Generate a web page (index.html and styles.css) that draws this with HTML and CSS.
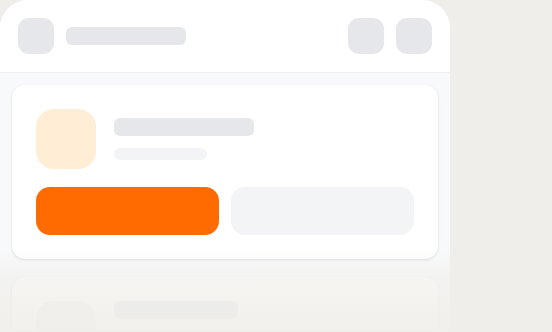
FILE: index.html
```html
<!DOCTYPE html>
<html lang="en">
<head>
  <meta charset="UTF-8" />
  <title>Skeleton</title>
  <link rel="stylesheet" href="styles.css">
</head>
<body>

<div class="phone">
  <header class="topbar">
    <div class="sk sk-icon"></div>
    <div class="sk sk-title"></div>
    <div class="spacer"></div>
    <div class="sk sk-icon"></div>
    <div class="sk sk-icon"></div>
  </header>

  <main class="feed">
    <div class="card">
      <div class="card-head">
        <div class="avatar"></div>
        <div class="lines">
          <div class="sk line-1"></div>
          <div class="sk line-2"></div>
        </div>
      </div>
      <div class="actions">
        <div class="btn btn-primary"></div>
        <div class="btn btn-ghost"></div>
      </div>
    </div>

    <div class="card card-muted">
      <div class="card-head top">
        <div class="avatar avatar-muted"></div>
        <div class="lines">
          <div class="sk line-short"></div>
        </div>
      </div>
    </div>
  </main>

  <div class="fade"></div>
</div>

</body>
</html>
```

FILE: styles.css
```css
body {
  margin: 0;
  background: #efeeea;
  font-family: "Inter", sans-serif;
  height: 332px;
  overflow: hidden;
}

.phone {
  position: relative;
  width: 450px;
  height: 330px;
  background: #f8f9fa;
  border-radius: 28px 28px 0 0;
  overflow: hidden;
}

.topbar {
  height: 73px;
  box-sizing: border-box;
  padding: 18px;
  background: white;
  border-bottom: 1px solid #f0f0f2;
  display: flex;
  align-items: flex-start;
  gap: 12px;
}
.spacer {
  flex: 1;
}
.sk {
  background: #e5e7eb;
  border-radius: 6px;
}
.sk-icon {
  width: 36px;
  height: 36px;
  border-radius: 11px;
}
.sk-title {
  width: 120px;
  height: 18px;
  margin-top: 9px;
}

.feed {
  padding: 12px;
  display: flex;
  flex-direction: column;
  gap: 18px;
}
.card {
  background: white;
  border-radius: 13px;
  padding: 24px;
  box-shadow: 0 1px 3px rgba(0,0,0,0.10), 0 1px 2px rgba(0,0,0,0.04);
}
.card-head {
  display: flex;
  align-items: center;
  gap: 18px;
}
.card-head.top {
  align-items: flex-start;
}
.avatar {
  width: 60px;
  height: 60px;
  border-radius: 18px;
  background: #ffedd5;
  flex-shrink: 0;
}
.avatar-muted {
  background: #f3f1ee;
}
.lines {
  display: flex;
  flex-direction: column;
  gap: 12px;
}
.line-1 {
  width: 140px;
  height: 18px;
}
.line-2 {
  width: 93px;
  height: 12px;
  background: #f3f4f6;
}
.line-short {
  width: 124px;
  height: 18px;
}
.actions {
  display: flex;
  gap: 12px;
  margin-top: 18px;
}
.btn {
  flex: 1;
  height: 48px;
  border-radius: 14px;
}
.btn-primary {
  background: #ff6b00;
}
.btn-ghost {
  background: #f3f4f6;
}

.fade {
  position: absolute;
  left: 0; right: 0; bottom: 0;
  height: 80px;
  background: linear-gradient(to bottom, rgba(239,238,234,0) 0%, rgba(239,238,234,0.6) 35%, rgba(239,238,234,0.88) 100%);
}
```
